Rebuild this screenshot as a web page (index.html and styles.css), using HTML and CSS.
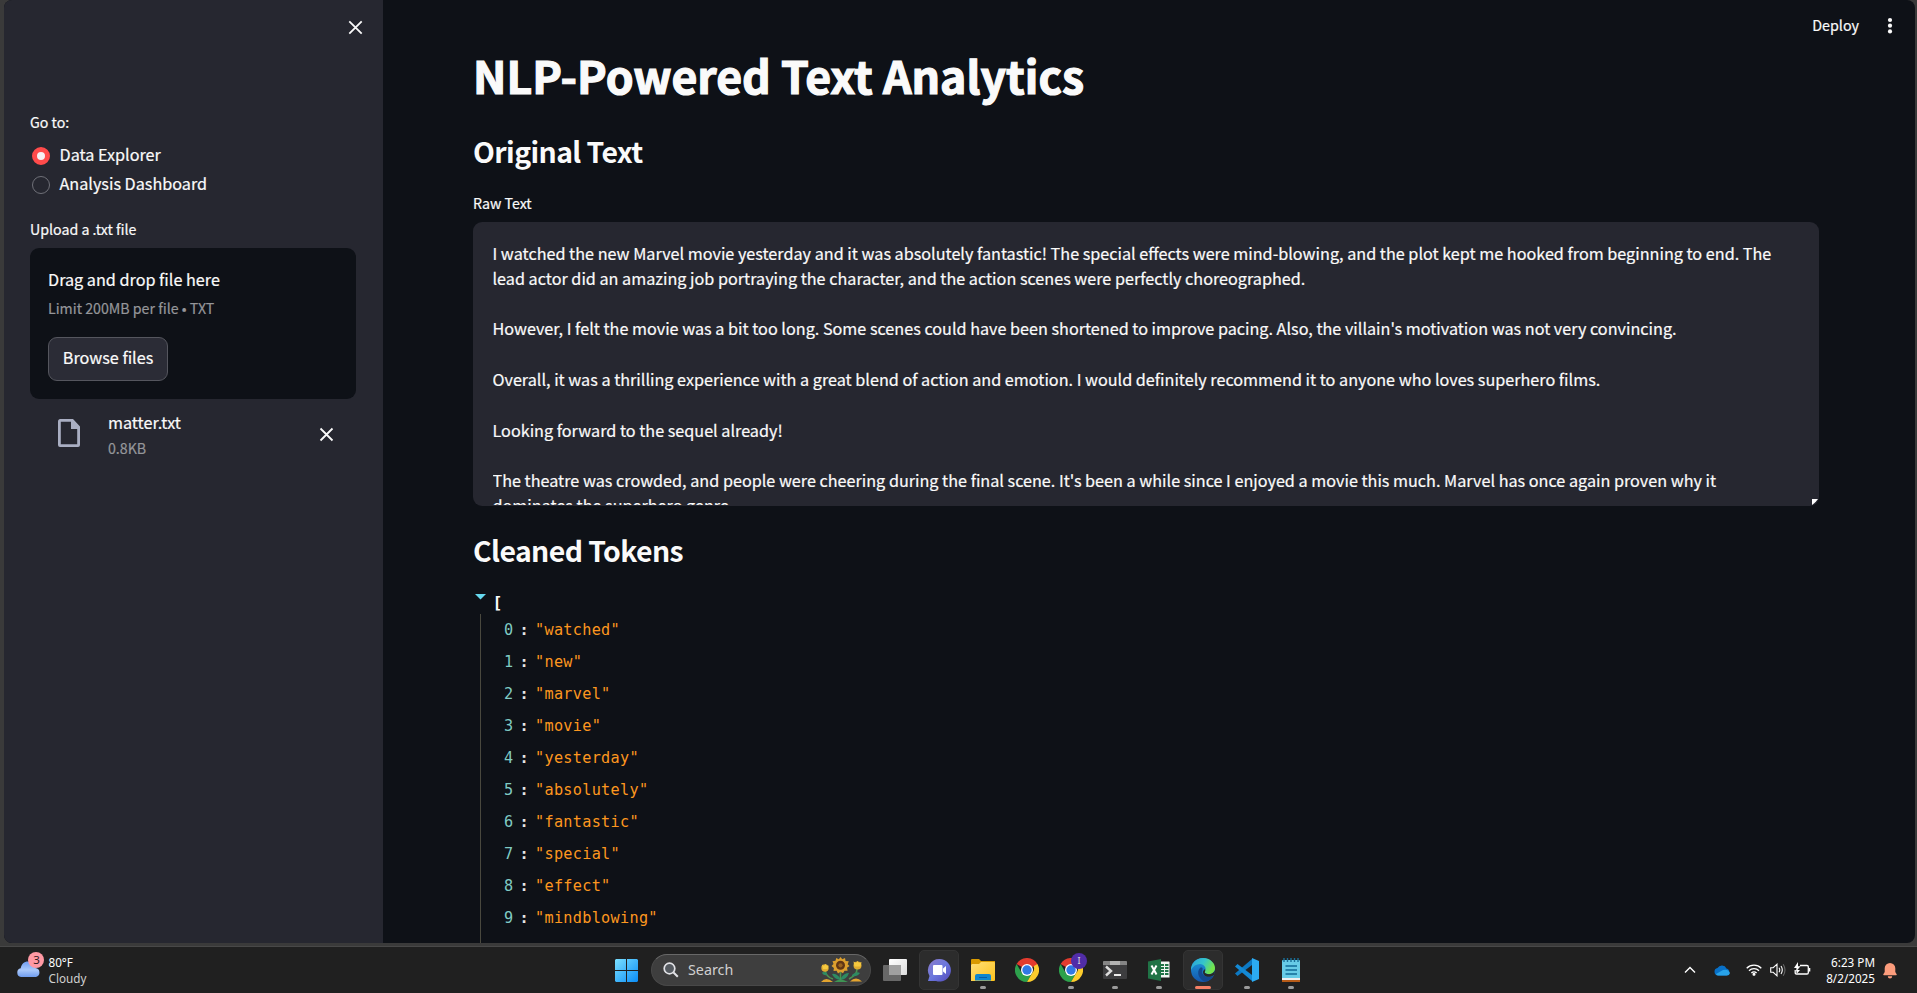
FILE: index.html
```html
<!DOCTYPE html>
<html lang="en">
<head>
<meta charset="utf-8">
<title>NLP-Powered Text Analytics</title>
<link rel="stylesheet" href="styles.css">
</head>
<body>
<div class="window">
  <aside class="sidebar">
    <div class="sidebar-head">
      <svg class="close" width="15" height="15" viewBox="0 0 15 15"><path d="M1.3 1.3l12.4 12.4M13.7 1.3L1.3 13.7"/></svg>
    </div>
    <div class="label">Go to:</div>
    <div class="radio"><span class="dot on"></span><span>Data Explorer</span></div>
    <div class="radio"><span class="dot"></span><span>Analysis Dashboard</span></div>
    <div class="label upload-label">Upload a .txt file</div>
    <div class="dropzone">
      <div class="drop-title">Drag and drop file here</div>
      <div class="hint">Limit 200MB per file • TXT</div>
      <button class="browse">Browse files</button>
    </div>
    <div class="file">
      <svg class="file-icon" width="22" height="28" viewBox="0 0 22 28"><path d="M3 0h12l7 7.500V26a2 2 0 0 1-2 2H2a2 2 0 0 1-2-2V2.500A2.500 2.500 0 0 1 3 0zm-.2 2.800v22.400h16.400V10H13V2.800z" fill-rule="evenodd"/></svg>
      <div class="file-text"><div class="file-name">matter.txt</div><div class="hint">0.8KB</div></div>
      <svg class="close" width="15" height="15" viewBox="0 0 15 15"><path d="M1.500 1.500l12 12M13.500 1.500l-12 12"/></svg>
    </div>
  </aside>
  <main class="main">
    <div class="toolbar"><span>Deploy</span>
      <svg width="6" height="18" viewBox="0 0 6 18" fill="#fafafa"><circle cx="3" cy="3" r="2.100"/><circle cx="3" cy="8.700" r="2.100"/><circle cx="3" cy="14.400" r="2.100"/></svg>
    </div>
    <h1>NLP-Powered Text Analytics</h1>
    <h2>Original Text</h2>
    <div class="label raw-label">Raw Text</div>
    <div class="textbox">
      <div class="text-clip"><p>I watched the new Marvel movie yesterday and it was absolutely fantastic! The special effects were mind-blowing, and the plot kept me hooked from beginning to end. The<br>lead actor did an amazing job portraying the character, and the action scenes were perfectly choreographed.</p>
      <p class="loose">However, I felt the movie was a bit too long. Some scenes could have been shortened to improve pacing. Also, the villain's motivation was not very convincing.</p>
      <p class="loose">Overall, it was a thrilling experience with a great blend of action and emotion. I would definitely recommend it to anyone who loves superhero films.</p>
      <p>Looking forward to the sequel already!</p>
      <p>The theatre was crowded, and people were cheering during the final scene. It's been a while since I enjoyed a movie this much. Marvel has once again proven why it<br>dominates the superhero genre.</p></div>
      <svg class="grip" width="6" height="6" viewBox="0 0 6 6"><path d="M0 0h6L4 2.500 2.500 4 0 6z" fill="#fff"/></svg>
    </div>
    <h2 class="tokens-title">Cleaned Tokens</h2>
    <div class="json">
      <div class="json-open"><svg width="11" height="6" viewBox="0 0 11 6"><path d="M0 0h11L5.500 5.500z" fill="#66d9ef"/></svg><span>[</span></div>
      <div class="tree">
        <div class="row"><i>0</i><b>:</b><span>"watched"</span></div>
        <div class="row"><i>1</i><b>:</b><span>"new"</span></div>
        <div class="row"><i>2</i><b>:</b><span>"marvel"</span></div>
        <div class="row"><i>3</i><b>:</b><span>"movie"</span></div>
        <div class="row"><i>4</i><b>:</b><span>"yesterday"</span></div>
        <div class="row"><i>5</i><b>:</b><span>"absolutely"</span></div>
        <div class="row"><i>6</i><b>:</b><span>"fantastic"</span></div>
        <div class="row"><i>7</i><b>:</b><span>"special"</span></div>
        <div class="row"><i>8</i><b>:</b><span>"effect"</span></div>
        <div class="row"><i>9</i><b>:</b><span>"mindblowing"</span></div>
      </div>
    </div>
  </main>
</div>
<footer class="taskbar">
  <div class="weather">
    <svg width="28" height="28" viewBox="0 0 28 28">
      <defs><linearGradient id="cl" x1="0" y1="0" x2="0" y2="1"><stop offset="0" stop-color="#6d9cf0"/><stop offset=".55" stop-color="#abc9fa"/><stop offset="1" stop-color="#6f9cee"/></linearGradient></defs>
      <path d="M5 26a4.500 4.500 0 0 1-.3-8.800C5.500 13 8 10.500 12 10.500c4 0 6.500 2.500 7.500 6.500A4.600 4.600 0 0 1 20 26z" fill="url(#cl)"/>
      <circle cx="20" cy="9" r="8" fill="#ff99a4"/><text x="20.500" y="13" class="badge-num">3</text>
    </svg>
    <div class="weather-text"><div class="temp">80°F</div><div>Cloudy</div></div>
  </div>
  <nav class="apps">
    <svg class="start" width="23" height="23" viewBox="0 0 23 23"><defs><linearGradient id="w" x1="0" y1="0" x2="1" y2="1"><stop offset="0" stop-color="#7be0ff"/><stop offset="1" stop-color="#0a8cf5"/></linearGradient></defs><path d="M1 0h10v11H0V1zM12 0h10l1 1v10H12zM0 12h11v11H1l-1-1zM12 12h11v10l-1 1H12z" fill="url(#w)"/></svg>
    <div class="search">
      <svg width="16" height="16" viewBox="0 0 16 16" fill="none" stroke="#e2e2e6" stroke-width="1.700"><circle cx="6.500" cy="6.500" r="5.300" fill="#555a60"/><path d="M10.500 10.500l4.300 4.300" stroke-width="2"/></svg>
      <span>Search</span>
      <svg class="flowers" width="42" height="26" viewBox="0 0 42 26">
        <path d="M19.500 15v9M36 12q0 6-8 10M4 13q1 7 8 9" fill="none" stroke="#4d9250" stroke-width="1.600"/>
        <path d="M19 21q-4-5-8-4 2 5 8 6zM20 21q3-5 8-5-2 6-8 7zM31 18q4-4 8-2-3 4-8 3zM6 16q-4-2-5 0 2 3 5 2z" fill="#2e8b62"/>
        <path d="M0 25q5-6 12 0zM29 24.500q6-6 12 0z" fill="#e3a42f"/><path d="M13 25q6-5 14 0z" fill="#3e9454"/>
        <circle cx="4" cy="11" r="3.700" fill="#dfab30"/><path d="M1 7.500l2 1.500 1.500-2L6 9l1.500-.5-1 3.500H2z" fill="#f6c93f"/>
        <circle cx="36.500" cy="8.500" r="4" fill="#dfab30"/><path d="M32.500 4.500l2.500 1.500 1.500-2L38 6l2.500-1-1 4.500h-6z" fill="#f6c93f"/>
        <path d="M19.500 0l1.800 2.300L24 1l.6 3 3.200.2-1.200 3L28.500 9l-2.500 1.800.6 3-3.100-.1-1.500 2.600-2.500-1.500-2.500 1.700-1.400-2.800-3.100.2.400-3L10.500 9l2-2-1-2.800 3-.4L15.200 1l2.600 1.200z" fill="#dda02e"/><circle cx="19.500" cy="8.300" r="4.500" fill="#603615"/><circle cx="19.500" cy="8.300" r="2.100" fill="#9a641e"/>
      </svg>
    </div>
    <svg class="taskview" width="24" height="22" viewBox="0 0 24 22"><defs><linearGradient id="tv" x1="0" y1="0" x2="1" y2="1"><stop offset="0" stop-color="#fff"/><stop offset="1" stop-color="#ddd"/></linearGradient></defs><rect x="6" width="18" height="16" rx="1" fill="url(#tv)"/><rect y="6" width="18" height="16" rx="1" fill="#686868"/><path d="M6 6h12v10H6z" fill="#a0a0a0"/></svg>
    <div class="tile lit"><svg viewBox="0 0 24 24"><defs><linearGradient id="ch" x1="0" y1="0" x2="1" y2="1"><stop offset="0" stop-color="#8c7cc9"/><stop offset=".5" stop-color="#6b77dd"/><stop offset="1" stop-color="#5247b8"/></linearGradient></defs><path d="M12.500 1A11.300 11.300 0 1 1 9 23L1 23l1.500-5A11.300 11.300 0 0 1 12.500 1z" fill="url(#ch)"/><rect x="6" y="7" width="9.500" height="10" rx="1" fill="#fff"/><path d="M16 10.500l3-2.500v8l-3-2.500z" fill="#fff"/></svg></div>
    <div class="tile run"><svg viewBox="0 0 24 24"><defs><linearGradient id="fo" x1="0" y1="0" x2="1" y2="1"><stop offset="0" stop-color="#ffdf78"/><stop offset="1" stop-color="#fcc21c"/></linearGradient></defs><path d="M0 2q0-1 1-1h7l2 2h14v5H0z" fill="#d99a00"/><path d="M1 6h7l2-2h13q1 0 1 1v17q0 1-1 1H0V7z" fill="url(#fo)"/><path d="M4 22.500V18q0-2 2-2h12q2 0 2 2v4.500z" fill="#0e86cf"/><path d="M8 19.500h8" stroke="#075ba7"/></svg></div>
    <div class="tile"><svg viewBox="0 0 24 24"><use href="#chrome"/></svg></div>
    <div class="tile run"><svg viewBox="0 0 24 24"><g id="chrome"><path d="M12 12L1.600 6A12 12 0 0 1 22.400 6z" fill="#e33b2e"/><path d="M1.600 6A12 12 0 0 0 12 24l5.200-9L12 12 6.800 15z" fill="#2da14c"/><path d="M22.400 6A12 12 0 0 1 12 24l5.200-9A6 6 0 0 0 17 6z" fill="#fdcc2c"/><path d="M12 6h10.400L12 12z" fill="#e33b2e"/><circle cx="12" cy="12" r="6" fill="#fff"/><circle cx="12" cy="12" r="4.700" fill="#3179e6"/></g></svg><span class="profile">I</span></div>
    <div class="tile run"><svg viewBox="0 0 24 24"><rect y="3" width="24" height="18" rx="1" fill="#3d3d3f"/><path d="M0 7V4q0-1 1-1h22q1 0 1 1v3z" fill="#858585"/><path d="M7 3h10v4H7z" fill="#b3b3b3"/><path d="M3 8.500l5 4.500-5 4.500" fill="none" stroke="#ddd" stroke-width="2.400"/><path d="M11 17h7" stroke="#fff" stroke-width="1.800"/></svg></div>
    <div class="tile run"><svg viewBox="0 0 24 24"><path d="M12 3.500h10q.5 0 .5.500v15.500H12z" fill="#f2f5f3"/><path d="M14 6h3v2h-3zm0 3h3v2h-3zm0 3h3v2h-3zm0 3h3v2h-3zm4-9h3.500v2h-3.500zm0 3h3.500v2h-3.500zm0 3h3.500v2h-3.500zm0 3h3.500v2h-3.500z" fill="#207346"/><path d="M1 3.500L14 1v22L1 20.500z" fill="#207346"/><path d="M4.500 7.500l5 9M9.500 7.500l-5 9" stroke="#fff" stroke-width="2"/></svg></div>
    <div class="tile lit active"><svg viewBox="0 0 24 24"><defs><linearGradient id="eg" x1="0" y1="0" x2="1" y2=".4"><stop offset="0" stop-color="#289fdf"/><stop offset=".55" stop-color="#35c5ca"/><stop offset="1" stop-color="#74e44a"/></linearGradient><linearGradient id="eb" x1="0" y1="0" x2="0" y2="1"><stop offset="0" stop-color="#1d9bdc"/><stop offset="1" stop-color="#1456ad"/></linearGradient></defs><circle cx="12" cy="12" r="12" fill="url(#eb)"/><path d="M0 12C0 5 5 0 12 0s12 5 12 10c0 4-3 6-6 6-3 0-5-1-4-3 2-3-1-7-5-7-4 0-7 2-9 6z" fill="url(#eg)"/><path d="M9 10c-4 4-1 12 5 13.500 4-.5 7-3 8.500-5.500-7 3-13-1-11-6.500.5-2-1-2.500-2.500-1.500z" fill="#13488e"/><path d="M14 11c1 2-1 3 0 4 3 2 7 2 9.500-2L24 12l-.5 4.500c-3 3-11 4-11.500-2.500 0-1 1-2 2-3z" fill="#282828"/></svg></div>
    <div class="tile run"><svg viewBox="0 0 24 24"><path d="M17 1L0 15.500l2.500 2.500L17 7z" fill="#0d79c3"/><path d="M17 23L0 8.500 2.500 6 17 17z" fill="#1489d4"/><path d="M17 0l7 3v18l-7 3z" fill="#2cabf2"/></svg></div>
    <div class="tile run"><svg viewBox="0 0 24 24"><path d="M3 20h18v4H3z" fill="#b65b18"/><path d="M3 19h18v3H3z" fill="#eee"/><path d="M3 3q0-1 1-1h16q1 0 1 1v17H3z" fill="#67cbe6"/><path d="M5 0v4M8.500 0v4M12 0v4M15.500 0v4M19 0v4" stroke="#196f98" stroke-width="1.400"/><path d="M6.500 8h11.500M6.500 12h11.500M6.500 16h11.500" stroke="#126b96" stroke-width="1.600"/></svg></div>
  </nav>
  <div class="tray">
    <svg class="chev" width="12" height="8" viewBox="0 0 12 8"><path d="M1 6.500l5-5 5 5" fill="none" stroke="#fff" stroke-width="1.400"/></svg>
    <svg class="drive" width="16" height="11" viewBox="0 0 16 11"><path d="M4 10.500A3.800 3.800 0 0 1 3.500 3 5 5 0 0 1 12.500 3.500 3.600 3.600 0 0 1 12.500 10.500z" fill="#0870c7"/><path d="M4 10.500q-2-.5-2-1.500l7-4q5-1.500 7 3-.7 2.500-3 2.500z" fill="#28a2e8"/></svg>
    <svg class="wifi" width="16" height="13" viewBox="0 0 16 13" fill="none" stroke="#fff" stroke-width="1.300"><path d="M.7 5.200a10.300 10.300 0 0 1 14.600 0M3 7.700a7 7 0 0 1 10 0M5.400 10a3.700 3.700 0 0 1 5.200 0"/><circle cx="8" cy="11.300" r=".9" fill="#fff"/></svg>
    <svg class="vol" width="16" height="14" viewBox="0 0 16 14" fill="none" stroke="#fff" stroke-width="1.100"><path d="M.7 4.700h2.500L7 1.200v11.600L3.200 9.300H.7zM9 4.700q1.500 2.300 0 4.600M11 3q2.600 4 0 8"/><path d="M13.200 1.300q3.600 5.700 0 11.400" stroke="#666"/></svg>
    <svg class="bat" width="17" height="14" viewBox="0 0 17 14"><path d="M6 3.500h7q1.300 0 1.300 1.300v6q0 1.200-1.300 1.200H2.500q-1.300 0-1.300-1.200V8" fill="none" stroke="#fff" stroke-width="1.300"/><path d="M15 6h1.300v3.500H15zM2.500 8H6l-2.500 3h-1z" fill="#fff"/><path d="M4 0L0 6h2.500L2 9.500 6.500 4.300H4z" fill="#fff"/></svg>
    <div class="clock"><div>6:23 PM</div><div>8/2/2025</div></div>
    <svg class="bell" width="14" height="16" viewBox="0 0 14 16"><path d="M7 0a5.300 5.300 0 0 1 5.300 5.300V9l1.500 2.500q0 .7-.7.7H.9q-.7 0-.7-.7L1.700 9V5.300A5.300 5.300 0 0 1 7 0zM4.800 13.200h4.400a2.200 2.200 0 0 1-4.400 0z" fill="#fb9c7c"/></svg>
  </div>
</footer>
</body>
</html>
```

FILE: styles.css
```css
* { box-sizing: border-box; }
body {
  margin: 0;
  width: 1917px;
  height: 993px;
  overflow: hidden;
  display: flex;
  flex-direction: column;
  background: #3a3a3a;
  color: #fafafa;
  font: 16.2px/25px "Noto Sans CJK JP", "Noto Sans CJK SC", "Noto Sans", sans-serif;
}
svg { display: block; flex: none; }

.window {
  display: flex;
  height: 943px;
  margin: 0 2px 3px 4px;
  border-radius: 8px;
  overflow: hidden;
  background: #0e1117;
  -webkit-text-stroke: 0.2px currentColor;
}

/* Sidebar */
.sidebar { width: 379px; flex: none; background: #262730; padding: 0 27px 0 26px; }
.sidebar-head { height: 110px; display: flex; justify-content: flex-end; padding: 20px 0 0; margin-right: -7px; }
.close { fill: none; stroke: #fafafa; stroke-width: 1.8; }
.label { font-size: 14.2px; line-height: 24px; }
.radio { display: flex; align-items: center; gap: 9.5px; height: 29px; padding-left: 2px; }
.label + .radio { margin-top: 6px; }
.dot { width: 18px; height: 18px; border-radius: 50%; border: 1px solid #6f7078; margin-top: 3px; }
.dot.on { border: 5.5px solid #ff4b4b; background: #f6f1f4; }
.upload-label { margin-top: 19px; }
.dropzone { margin-top: 7px; height: 151px; border-radius: 9px; background: #0e1117; padding: 18px 18px; }
.drop-title, .file-name { line-height: 26px; }
.hint { font-size: 14.2px; line-height: 24px; color: #95969a; }
.dropzone .hint { margin-top: 4px; }
.browse {
  display: block;
  margin: 17px 0 0;
  width: 120px;
  height: 44px;
  padding: 0 0 3px;
  border: 1px solid #55565e;
  border-radius: 9px;
  background: #2b2c36;
  color: #fafafa;
  font: inherit;
}
.file { display: flex; align-items: flex-start; padding: 10px 22px 0 28px; }
.file-icon { fill: #a9aec2; margin: 10px 28px 0 0; }
.file-text { flex: 1; }
.file-text .hint { margin-top: 1px; }
.file .close { margin-top: 18px; }

/* Main */
.main { flex: 1; display: flex; flex-direction: column; padding: 0 96px 0 90px; }
.toolbar { height: 50px; flex: none; display: flex; justify-content: flex-end; align-items: flex-start; gap: 28px; margin-right: -74px; padding-top: 14px; font-size: 14.3px; line-height: 22px; }
.toolbar svg { margin-top: 3px; }
h1, h2 { margin: 0; font-weight: 700; white-space: nowrap; }
h1 { font-size: 44.6px; line-height: 60px; margin-top: -5px; -webkit-text-stroke-width: 1.2px; }
h2 { font-size: 28.4px; line-height: 40px; margin-top: 26px; letter-spacing: -0.58px; -webkit-text-stroke-width: 0; }
.raw-label { margin-top: 20px; }
.textbox { margin-top: 7px; height: 284px; flex: none; border-radius: 9px; background: #262730; padding: 19px 0 1px 19.5px; position: relative; }
.text-clip { height: 264px; overflow: hidden; white-space: nowrap; }
.text-clip p { margin: 0 0 25px; }
.text-clip .loose { margin-bottom: 26px; }
.grip { position: absolute; right: 1px; bottom: 1px; }
.tokens-title { margin-top: 24px; }
.json { margin-top: 23px; font-family: "DejaVu Sans Mono", monospace; font-size: 15.2px; letter-spacing: 0.3px; line-height: 32px; -webkit-text-stroke-width: 0; }
.json-open { display: flex; height: 21px; padding-left: 2px; gap: 6.5px; line-height: 19px; font-size: 16.5px; font-weight: 700; }
.json-open svg { margin-top: 1px; }
.tree { margin-left: 7px; border-left: 1px solid #49483e; height: 329px; padding-left: 23px; }
.row { display: flex; height: 32px; }
.row i { font-style: normal; color: #80cbc4; width: 15.5px; }
.row b { width: 15.5px; color: #e6e6e6; }
.row span { color: #fd971f; }

/* Taskbar */
.taskbar { height: 47px; flex: none; display: flex; border-top: 1px solid #484848; background: #202020; font: 11.7px/16px "Noto Sans", sans-serif; color: #fff; }
.weather { width: 615px; padding: 4px 0 0 16px; display: flex; gap: 4.5px; }
.weather-text { padding-top: 3px; color: #d0d0d0; }
.temp { color: #fff; }
.badge-num { font: 11.5px "Noto Sans", sans-serif; text-anchor: middle; fill: #30181c; }
.apps { display: flex; align-items: flex-start; width: 1068px; }
.start { margin: 12px 13px 0 0; }
.search { width: 220px; height: 32px; margin: 7px 12px 0 0; border-radius: 16px; background: #3e3e3e; border: 1px solid #484848; border-top-color: #686868; display: flex; align-items: center; padding: 0 7px 0 11px; font-size: 14.3px; color: #d0d0d0; }
.search span { margin-left: 9px; flex: 1; }
.taskview { margin: 12px 12px 0 0; }
.tile { width: 40px; height: 40px; margin: 3px 4px 0 0; padding: 8px; border-radius: 5px; position: relative; }
.tile svg { width: 24px; height: 24px; }
.lit { background: #2c2c2c; border: 1px solid #343434; padding: 7px; }
.run::after, .active::after { content: ""; position: absolute; bottom: 1px; left: 17px; width: 6px; height: 3px; border-radius: 2px; background: #9b9b9b; }
.active::after { left: 11px; bottom: 0; width: 16px; background: #f68065; }
.profile { position: absolute; left: 20px; top: 3px; width: 16px; height: 16px; border-radius: 50%; background: #512da8; color: #ddd; font-size: 9px; text-align: center; }
.tray { flex: 1; display: flex; align-items: flex-start; }
.chev { margin: 19px 0 0 1px; }
.drive { margin: 18px 0 0 18px; }
.wifi { margin: 16px 0 0 16px; }
.vol { margin: 16px 0 0 8px; }
.bat { margin: 15px 0 0 8px; }
.clock { width: 64px; padding-top: 7px; text-align: right; }
.bell { margin: 16px 0 0 8px; }
```
